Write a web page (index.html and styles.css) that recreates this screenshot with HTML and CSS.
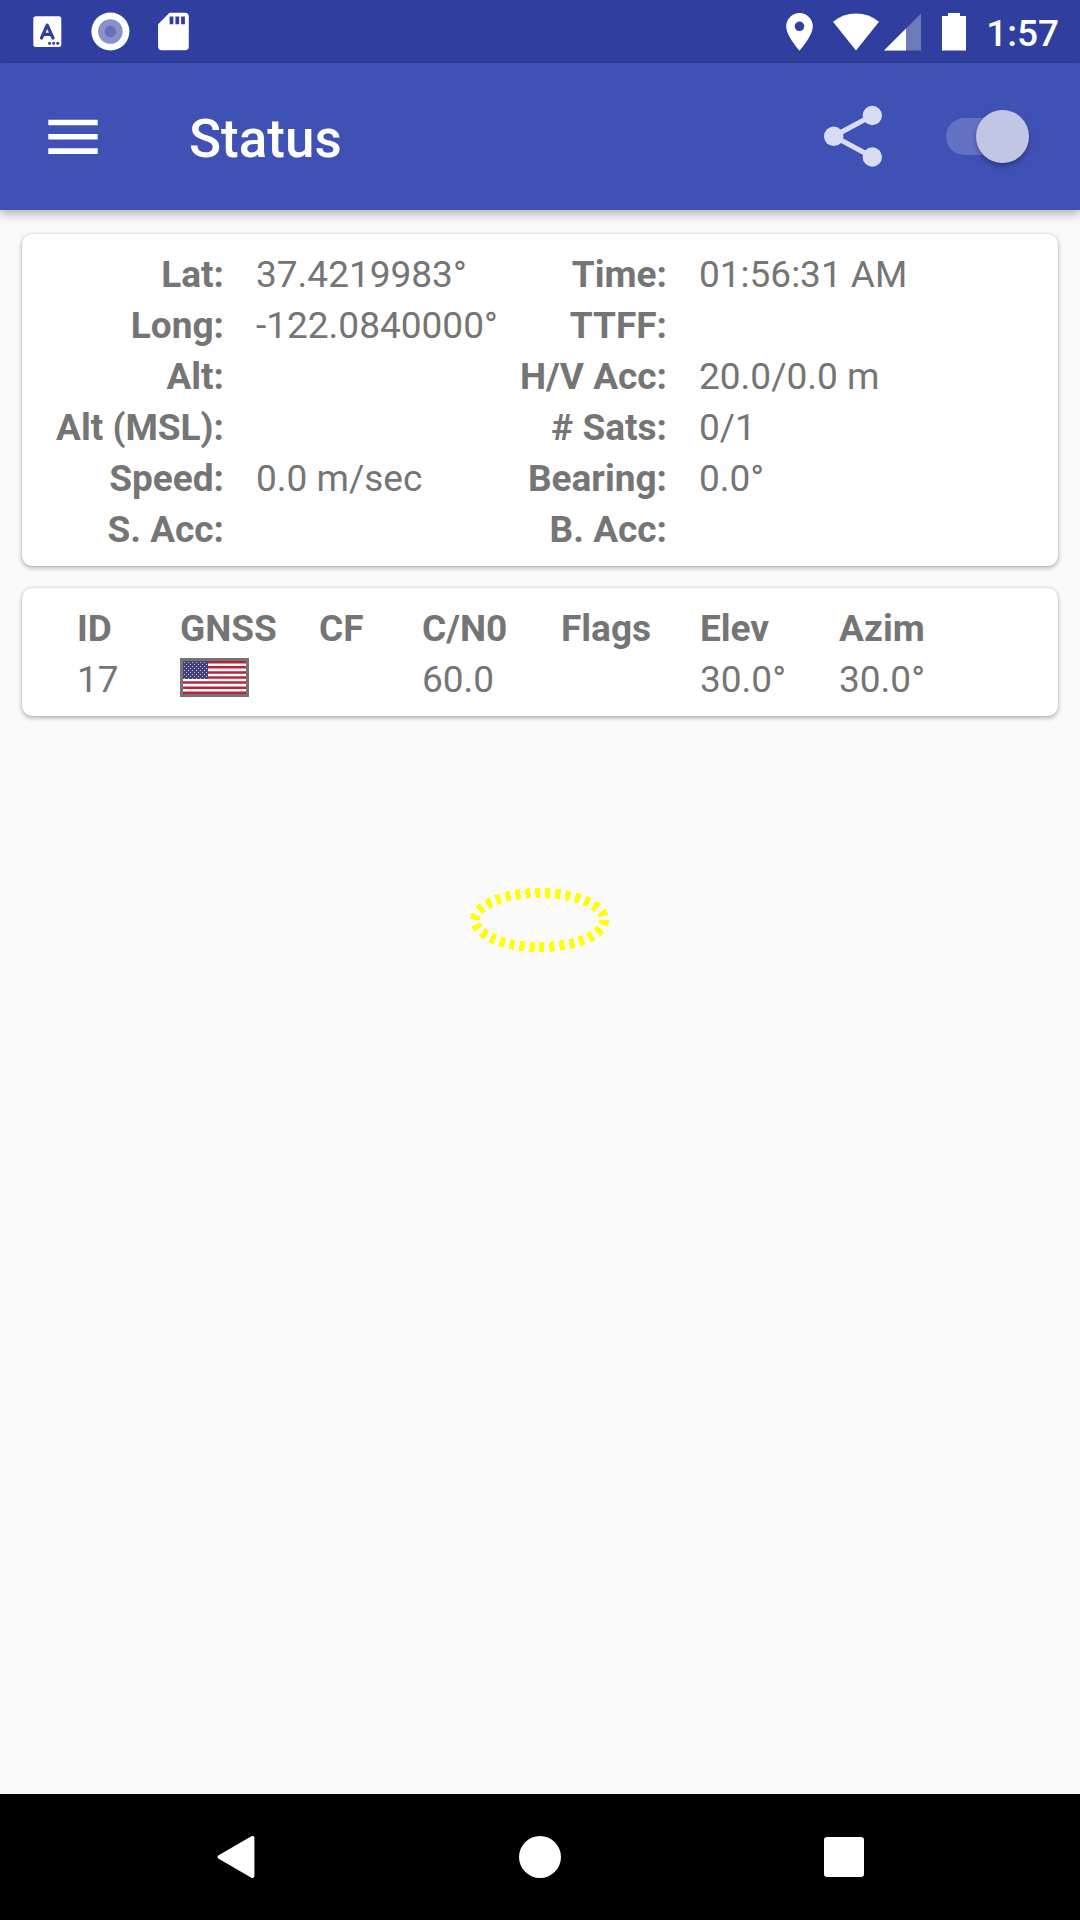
FILE: index.html
```html
<!DOCTYPE html>
<html lang="en">
<head>
<meta charset="utf-8">
<meta name="viewport" content="width=device-width, initial-scale=1">
<title>Status</title>
<link rel="stylesheet" href="styles.css">
</head>
<body>
<div class="statusbar">
  <div class="notifications">
    <svg class="notice" viewBox="0 0 42 42" aria-hidden="true">
      <rect x="7.3" y="5.3" width="28" height="30.7" rx="2.5" fill="#fff"/>
      <path d="M15.5 27 21.2 14.2 27 27M17.6 23.4h7.2" fill="none" stroke="#303f9f" stroke-width="3.2" stroke-linecap="round" stroke-linejoin="round"/>
      <g fill="#303f9f"><circle cx="23.5" cy="32.3" r="1.5"/><circle cx="27.6" cy="32.3" r="1.5"/><circle cx="31.7" cy="32.3" r="1.5"/></g>
    </svg>
    <svg class="notice" viewBox="0 0 42 42" aria-hidden="true">
      <circle cx="21.4" cy="20.5" r="19" fill="#fff"/><circle cx="21.4" cy="20.5" r="12.3" fill="#8891c9"/><circle cx="21.4" cy="20.5" r="5.7" fill="#6670b8"/>
    </svg>
    <svg class="notice" viewBox="0 0 42 42" aria-hidden="true">
      <path fill="#fff" fill-rule="evenodd" d="M17.5 1.8H33a3.8 3.8 0 0 1 3.8 3.8V35.4a3.8 3.8 0 0 1-3.8 3.8H9.9a3.8 3.8 0 0 1-3.8-3.8V13.2zM17.6 5.4v7.8h3.8V5.4zm5.8 0v7.8h3.8V5.4zm5.7 0v7.8h3.8V5.4z"/>
    </svg>
  </div>
  <div class="system">
    <svg class="pin" viewBox="0 0 27 38" aria-hidden="true"><path fill="#fff" fill-rule="evenodd" d="M13.5 0A13.3 13.3 0 0 0 .2 13.3C.2 23.2 13.5 37.6 13.5 37.6S26.8 23.2 26.8 13.3A13.3 13.3 0 0 0 13.5 0zm0 8.5a4.8 4.8 0 1 1 0 9.6 4.8 4.8 0 0 1 0-9.6z"/></svg>
    <span class="radio">
      <svg class="wifi" viewBox="0 0 46 38" aria-hidden="true"><path fill="#fff" d="M0 8.8Q10 .5 23 .5T46 8.8L23 37.6z"/></svg>
      <svg class="cell" viewBox="0 0 37 38" aria-hidden="true"><path fill="#7079bb" d="M37 .5v37H0z"/><path fill="#fff" d="M22 15.5v22H0z"/></svg>
    </span>
    <svg class="battery" viewBox="0 0 24 38" aria-hidden="true"><path fill="#fff" d="M6 0h12v3h6v34.5H0V3h6z"/></svg>
    <span class="clock">1:57</span>
  </div>
</div>
<header class="appbar">
  <button class="menu" type="button" aria-label="Open navigation">
    <svg class="menu-icon" viewBox="0 0 50 36" aria-hidden="true"><path fill="#fff" d="M.3.7h49.4v5.6H.3zM.3 15h49.4v5.6H.3zM.3 29.3h49.4v5.6H.3z"/></svg>
  </button>
  <h1 class="title">Status</h1>
  <button class="share" type="button" aria-label="Share">
    <svg class="share-icon" viewBox="0 0 63 63" aria-hidden="true"><g fill="#d9dcf0"><circle cx="11.7" cy="31.3" r="9.7"/><circle cx="50.3" cy="10.5" r="9.7"/><circle cx="50.3" cy="52" r="9.7"/></g><path d="M50.3 10.5 11.7 31.3l38.6 20.7" fill="none" stroke="#d9dcf0" stroke-width="5"/></svg>
  </button>
  <input class="switch" type="checkbox" role="switch" aria-label="Location updates" checked>
</header>
<main class="content">
  <dl class="card facts">
    <dt>Lat:</dt><dd>37.4219983°</dd><dt>Time:</dt><dd>01:56:31 AM</dd>
    <dt>Long:</dt><dd>-122.0840000°</dd><dt>TTFF:</dt><dd></dd>
    <dt>Alt:</dt><dd></dd><dt>H/V Acc:</dt><dd>20.0/0.0 m</dd>
    <dt>Alt (MSL):</dt><dd></dd><dt># Sats:</dt><dd>0/1</dd>
    <dt>Speed:</dt><dd>0.0 m/sec</dd><dt>Bearing:</dt><dd>0.0°</dd>
    <dt>S. Acc:</dt><dd></dd><dt>B. Acc:</dt><dd></dd>
  </dl>
  <section class="card satellites">
    <table class="sat-table">
      <colgroup><col class="narrow"><col class="wide"><col class="narrow"><col class="wide"><col class="wide"><col class="wide"><col></colgroup>
      <thead><tr><th scope="col">ID</th><th scope="col">GNSS</th><th scope="col">CF</th><th scope="col">C/N0</th><th scope="col">Flags</th><th scope="col">Elev</th><th scope="col">Azim</th></tr></thead>
      <tbody><tr><td>17</td><td class="flag-cell">
        <svg class="flag" viewBox="0 0 69 39" role="img" aria-label="USA">
          <defs><pattern id="stars" x="3" y="3" width="4" height="4" patternUnits="userSpaceOnUse"><path fill="#b5b4d0" d="M1 1h1v1H1zM3 3h1v1H3z"/></pattern></defs>
          <path fill="#757575" d="M0 0h69v39H0z"/>
          <path fill="#fff" d="M3 3h63v33H3z"/>
          <path d="M3 4.27h63M3 9.35h63M3 14.43h63M3 19.5h63M3 24.58h63M3 29.65h63M3 34.73h63" stroke="#b92338" stroke-width="2.54"/>
          <path fill="#46457a" d="M3 3h25v17.8H3z"/><path fill="url(#stars)" d="M3 3h25v17.8H3z"/>
        </svg>
      </td><td></td><td>60.0</td><td></td><td>30.0°</td><td>30.0°</td></tr></tbody>
    </table>
  </section>
  <svg class="ring" viewBox="0 0 140 66" aria-hidden="true"><ellipse cx="69.7" cy="33" rx="64.5" ry="27" fill="none" stroke="#ff0" stroke-width="10" stroke-dasharray="5 5" shape-rendering="crispEdges"/></svg>
</main>
<nav class="navbar" aria-label="System">
  <button class="key" type="button" aria-label="Back"><svg class="key-icon" viewBox="0 0 42 42" aria-hidden="true"><path d="M37.4 2v38L4.6 21z" fill="#fff" stroke="#fff" stroke-width="4" stroke-linejoin="round"/></svg></button>
  <button class="key" type="button" aria-label="Home"><svg class="key-icon" viewBox="0 0 42 42" aria-hidden="true"><circle cx="21" cy="21" r="21" fill="#fff"/></svg></button>
  <button class="key" type="button" aria-label="Recent apps"><svg class="key-icon" viewBox="0 0 42 42" aria-hidden="true"><rect x="1" y="1" width="40" height="40" rx="3" fill="#fff"/></svg></button>
</nav>
</body>
</html>
```
FILE: styles.css
```css
* {
  box-sizing: border-box;
}

body {
  margin: 0;
  min-height: 100vh;
  display: flex;
  flex-direction: column;
  background: #fafafa;
  color: #757575;
  font-family: Roboto, sans-serif;
  font-size: 37px;
  line-height: 51px;
}

button {
  display: flex;
  align-items: center;
  justify-content: center;
  margin: 0;
  padding: 0;
  border: 0;
  background: none;
}

svg {
  display: block;
  flex: none;
}

/* System status bar */
.statusbar {
  display: flex;
  align-items: center;
  justify-content: space-between;
  height: 63px;
  padding: 0 21px 0 26px;
  background: #303f9f;
  color: #fff;
}

.notifications {
  display: flex;
  gap: 21px;
}

.notice {
  width: 42px;
  height: 42px;
}

.system {
  display: flex;
  align-items: center;
  gap: 20px;
}

.radio {
  display: flex;
  gap: 5px;
  padding-right: 1px;
}

.pin {
  width: 27px;
  height: 38px;
}

.wifi {
  width: 46px;
  height: 38px;
}

.cell {
  width: 37px;
  height: 38px;
}

.battery {
  width: 24px;
  height: 38px;
}

.clock {
  padding-top: 4px;
  font-weight: 500;
}

/* App bar */
.appbar {
  display: flex;
  align-items: center;
  height: 147px;
  padding-right: 51px;
  background: #3f51b5;
  color: #fff;
  box-shadow: 0 4px 10px rgba(0, 0, 0, 0.3);
}

.menu {
  width: 146px;
  height: 146px;
}

.menu-icon {
  width: 50px;
  height: 36px;
}

.title {
  flex: 1;
  margin: 0;
  padding: 4px 0 0 43px;
  font-size: 53px;
  font-weight: 500;
  line-height: 72px;
}

.share {
  margin-right: 61px;
}

.share-icon {
  width: 63px;
  height: 63px;
}

.switch {
  appearance: none;
  display: flex;
  align-items: center;
  justify-content: flex-end;
  width: 83px;
  height: 37px;
  margin: 0;
  border-radius: 19px;
  background: linear-gradient(90deg, #6372c3 70px, transparent 70px);
}

.switch::before {
  content: "";
  flex: none;
  width: 53px;
  height: 53px;
  border-radius: 50%;
  background: #c1c6e4;
  box-shadow: 0 3px 5px rgba(0, 0, 0, 0.3);
}

/* Content */
.content {
  flex: 1;
  display: flex;
  flex-direction: column;
  gap: 22px;
  padding: 24px 22px;
}

.card {
  margin: 0;
  padding: 15px 0 11px;
  border-radius: 10px;
  background: #fff;
  box-shadow: 0 2px 5px rgba(0, 0, 0, 0.28), 0 0 2px rgba(0, 0, 0, 0.18);
}

.facts {
  display: grid;
  grid-template-columns: 202fr 282fr 161fr 391fr;
  grid-auto-rows: 51px;
}

.facts dt {
  font-weight: 700;
  text-align: right;
  white-space: nowrap;
}

.facts dd {
  margin: 0;
  padding-left: 32px;
  white-space: nowrap;
}

.satellites {
  padding-left: 55px;
}

.sat-table {
  width: 100%;
  table-layout: fixed;
  border-collapse: collapse;
}

.narrow {
  width: 103px;
}

.wide {
  width: 139px;
}

.sat-table th,
.sat-table td {
  height: 51px;
  padding: 0;
  text-align: left;
  vertical-align: middle;
}

.sat-table th {
  font-weight: 700;
}

.sat-table .flag-cell {
  padding-bottom: 4px;
}

.flag {
  width: 69px;
  height: 39px;
}

.ring {
  align-self: center;
  width: 140px;
  height: 66px;
  margin-top: 149px;
}

/* System navigation */
.navbar {
  display: grid;
  grid-template-columns: repeat(3, 1fr);
  height: 126px;
  padding: 0 84px;
  background: #000;
}

.key-icon {
  width: 42px;
  height: 42px;
}
```
